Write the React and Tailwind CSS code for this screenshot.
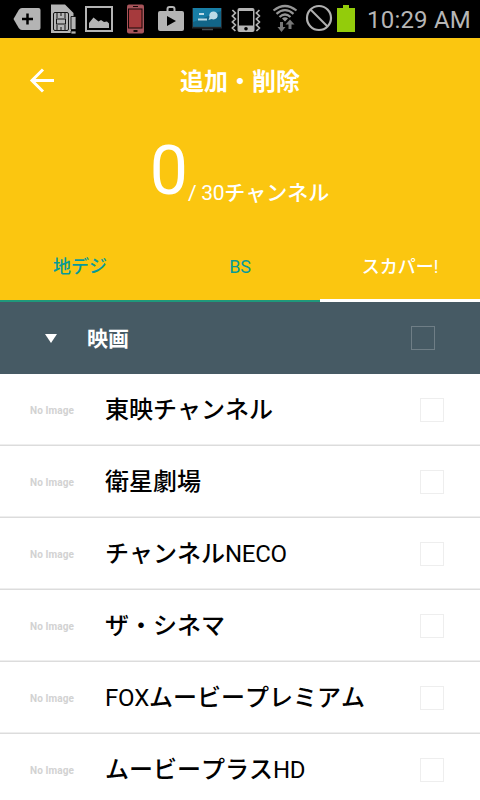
const CHANNELS = [
  '東映チャンネル',
  '衛星劇場',
  'チャンネルNECO',
  'ザ・シネマ',
  'FOXムービープレミアム',
  'ムービープラスHD',
];

// Latin runs stay regular while Japanese runs are set in medium.
function Mixed({ text }) {
  return text.split(/([A-Za-z0-9!\/ ]+)/).map((run, i) => (
    <span key={i} className={i % 2 ? 'font-normal tracking-[-0.3px]' : 'font-medium'}>{run}</span>
  ));
}

function StatusIcons() {
  return (
    <svg width="360" height="38" viewBox="0 0 360 38" className="shrink-0" fill="none">
      <path d="M22 8H38.500Q40.500 8 40.500 10V28Q40.500 30 38.500 30H22Q20 30 18.700 28L13.500 19L18.700 10Q20 8 22 8Z" fill="#b4b4b4" />
      <path d="M22 19H33M27.500 13.500V24.500" stroke="#000" strokeWidth="2.500" />

      <path d="M51 4.500H65L73.500 13V17H71V33H51Z" fill="#b4b4b4" />
      <rect x="53.500" y="12.500" width="15" height="18" rx="1.500" stroke="#111" />
      <path d="M57 13V18M61 13V16M65 13V18M57 30V25M61 30V27M65 30V25" stroke="#111" />
      <rect x="56.500" y="19" width="9" height="5" stroke="#111" />
      <path d="M71 16.500H76V29.500H71ZM71 31H76V34H71Z" fill="#b4b4b4" stroke="#000" strokeWidth=".8" />

      <rect x="86" y="7" width="26" height="24" stroke="#b4b4b4" strokeWidth="2" />
      <path d="M89 28V23L93.500 17.500L98.500 21.500L101 20L104 22L107 21.500L109 23.500V28Z" fill="#b4b4b4" />

      <rect x="127" y="4.500" width="17" height="29" rx="2" fill="#a7545a" />
      <rect x="128.500" y="9" width="13.500" height="19" fill="#a63a3d" stroke="#160707" />
      <path d="M133 6.500H138" stroke="#160707" />
      <rect x="133.500" y="30" width="4" height="2" fill="#160707" />

      <path d="M167.500 12V9Q167.500 7 169.500 7H172.500Q174.500 7 174.500 9V12" stroke="#b4b4b4" strokeWidth="2" />
      <path d="M158 13Q158 11 160 11H182Q184 11 184 13V29Q184 31 182 31H160Q158 31 158 29Z" fill="#b4b4b4" />
      <path d="M167 16L176 21L167 26Z" fill="#000" />

      <rect x="192" y="8" width="30" height="20.500" fill="#22282c" />
      <rect x="193" y="8" width="28" height="18.500" fill="#187ea6" />
      <path d="M193 22L221 11V26.500H193Z" fill="#126588" />
      <path d="M199 14H204M198 19.500H207" stroke="#bedbe6" strokeWidth="2" />
      <path d="M213 11.500A4.200 4 0 1 1 211.500 19L208.500 20L209.500 17A4.200 4 0 0 1 213 11.500Z" fill="#bedbe6" />
      <path d="M202 29.500H213" stroke="#444b50" strokeWidth="1.500" />

      <rect x="237.500" y="8" width="17" height="24" rx="2" fill="#b4b4b4" />
      <rect x="239" y="11" width="14" height="14.500" fill="#000" />
      <circle cx="246" cy="28.700" r="1.800" fill="#000" />
      <path d="M232 10L235 13L232 16L235 19L232 22L235 25L232 28L235 31M259 10L256 13L259 16L256 19L259 22L256 25L259 28L256 31" transform="translate(.4 0)" stroke="#b4b4b4" strokeWidth="1.700" />

      <path d="M273.500 10.500Q285 1.500 296.500 10.500M276.500 13.800Q285 6.500 293.500 13.800M279.500 17Q285 12 290.500 17" stroke="#969696" strokeWidth="2.200" />
      <path d="M282 18.500Q285 16 288 18.500L285 21.500Z" fill="#969696" />
      <path d="M280 22H283V27H285.500L281.500 32L277.500 27H280ZM288.500 29V24.500H285.500L290 19.500L294.500 24.500H291.500V29Z" fill="#777" />

      <circle cx="319" cy="18" r="12" stroke="#b0b0b0" strokeWidth="2.200" />
      <path d="M310.500 9.500L327.500 26.500" stroke="#b0b0b0" strokeWidth="2" />

      <path d="M343 5H349V8H355V32H337V8H343Z" fill="#93cc0b" />
    </svg>
  );
}

export default function App() {
  return (
    <div className="flex h-[800px] w-[480px] flex-col overflow-hidden bg-white font-[Roboto,'Noto_Sans_CJK_JP',sans-serif] [font-kerning:none]">
      <div className="flex h-[38px] shrink-0 items-center bg-black">
        <StatusIcons />
        <span className="ml-[7px] whitespace-nowrap pt-[2px] text-[24px] leading-9 tracking-[0.2px] text-[#b6b6b6]">10:29 AM</span>
      </div>

      <header className="h-[264px] shrink-0 bg-[#fbc610] text-white">
        <div className="grid h-[84px] grid-cols-[84px_1fr_84px] items-center">
          <svg width="26" height="26" viewBox="0 0 26 26" className="ml-[29px]" fill="none" stroke="#fff" strokeWidth="3">
            <path d="M25 13.500H3M14 2.500L3 13.500L14 24.500" />
          </svg>
          <h1 className="pt-[3px] text-center text-2xl font-bold">追加・削除</h1>
        </div>
        <div className="flex h-[108px] items-start justify-center whitespace-nowrap">
          <span className="-ml-px pt-px text-[68px] leading-[96px]">0</span>
          <span className="pt-14 text-[21px] leading-[30px]"><Mixed text="/ 30チャンネル" /></span>
        </div>
        <nav className="grid h-[72px] grid-cols-3 text-lg text-[#079a98]">
          <div className="flex items-center justify-center border-b-2 border-[#20987b] pt-[4px]"><Mixed text="地デジ" /></div>
          <div className="flex items-center justify-center border-b-2 border-[#20987b] pt-[4px]"><Mixed text="BS" /></div>
          <div className="flex items-center justify-center border-b-[3px] border-white pt-[4px] text-white"><Mixed text="スカパー!" /></div>
        </nav>
      </header>

      <div className="flex h-[72px] shrink-0 items-center bg-[#465a64] pl-[45px] pr-[45px] text-white">
        <svg width="12" height="9" viewBox="0 0 12 9" fill="#fff"><path d="M0 0H12L6 9Z" /></svg>
        <h2 className="ml-[30px] flex-1 pt-1 text-[21px] font-bold">映画</h2>
        <div className="size-6 border border-[#6f7e86]" />
      </div>

      <ul>
        {CHANNELS.map((name) => (
          <li key={name} className="flex h-[72px] items-center border-b border-[#dcdcdc] pl-[30px] pr-9 shadow-[inset_0_-1px_0_#eeeeee]">
            <span className="w-[75px] pt-0.5 text-[10px] font-bold tracking-[0.1px] text-[#d2d2d2]">No Image</span>
            <span className="flex-1 whitespace-nowrap text-2xl text-black"><Mixed text={name} /></span>
            <span className="mt-px size-6 border border-[#eeeeee]" />
          </li>
        ))}
      </ul>
    </div>
  );
}
